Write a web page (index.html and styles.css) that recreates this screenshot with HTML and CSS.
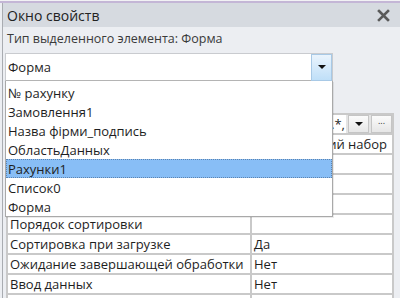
FILE: index.html
```html
<!DOCTYPE html>
<html lang="ru">
<head>
    <meta charset="UTF-8">
    <title>Окно свойств</title>
    <link rel="stylesheet" href="styles.css">
</head>
<body>
    <div class="topline"></div>
    <div class="pane">
        <div class="titlebar">
            <span class="title">Окно свойств</span>
            <svg class="close" width="13" height="13" viewBox="0 0 13 13">
                <path d="M2 2 L11 11 M11 2 L2 11" stroke="#5a5a5a" stroke-width="2.6" stroke-linecap="square"/>
            </svg>
        </div>
        <div class="selinfo">Тип выделенного элемента: Форма</div>

        <div class="combo-wrap">
            <div class="combo">
                <span class="combo-text">Форма</span>
                <span class="combo-btn"><span class="tri"></span></span>
            </div>
            <ul class="droplist">
                <li>№ рахунку</li>
                <li>Замовлення1</li>
                <li>Назва фірми_подпись</li>
                <li>ОбластьДанных</li>
                <li class="selected">Рахунки1</li>
                <li>Список0</li>
                <li>Форма</li>
            </ul>
        </div>

        <div class="sheet">
            <div class="cell"></div>
            <div class="cell value-btns">
                <span class="val-text"><span>и.*,</span></span>
                <span class="mini-btn"><span class="tri"></span></span>
                <span class="mini-btn dots">...</span>
            </div>
            <div class="cell"></div>
            <div class="cell val-right">ий набор</div>
            <div class="cell"></div>
            <div class="cell"></div>
            <div class="cell"></div>
            <div class="cell"></div>
            <div class="cell"></div>
            <div class="cell"></div>
            <div class="cell">Порядок сортировки</div>
            <div class="cell"></div>
            <div class="cell">Сортировка при загрузке</div>
            <div class="cell">Да</div>
            <div class="cell">Ожидание завершающей обработки</div>
            <div class="cell">Нет</div>
            <div class="cell">Ввод данных</div>
            <div class="cell">Нет</div>
            <div class="cell"></div>
            <div class="cell"></div>
        </div>
    </div>
</body>
</html>
```

FILE: styles.css
```css
html {
    height: 298px;
    overflow: hidden;
}
body {
    margin: 0;
    padding: 0;
    height: 298px;
    background-color: #eceef2;
    font-family: "Open Sans", "Noto Sans", sans-serif;
    color: #1e1e1e;
    overflow: hidden;
}
.topline {
    height: 1px;
    background-color: #f2f2f4;
    border-bottom: 2px solid #c4b6d6;
}
.pane {
    margin-left: 2px;
    border-left: 1px solid #a9acb1;
    height: 295px;
    overflow: hidden;
}
.titlebar {
    height: 24px;
    background-color: #d6dae0;
    display: flex;
    align-items: center;
    justify-content: space-between;
    padding: 0 10px 0 4px;
}
.title {
    font-size: 14px;
    color: #222;
}
.selinfo {
    font-size: 12.5px;
    color: #3a3a3a;
    padding: 3px 0 0 4px;
    height: 23px;
}
.combo-wrap {
    position: relative;
    margin-left: 2px;
    width: 328px;
}
.combo {
    height: 26px;
    background-color: white;
    border: 1px solid #c9cbcf;
    border-bottom-color: #b4b4b4;
    display: flex;
    align-items: center;
    justify-content: space-between;
}
.combo-text {
    font-size: 13px;
    padding-left: 2px;
}
.combo-btn {
    width: 19px;
    height: 25px;
    border: 1px solid #a8c9e6;
    background: linear-gradient(#eaf4fd, #bfdff8);
    display: flex;
    align-items: center;
    justify-content: center;
}
.tri {
    width: 0;
    height: 0;
    border-left: 4px solid transparent;
    border-right: 4px solid transparent;
    border-top: 4px solid #111;
}
.droplist {
    position: absolute;
    left: 0;
    top: 28px;
    width: 326px;
    margin: 0;
    padding: 2px 0 0 0;
    list-style: none;
    background-color: white;
    border: 1px solid #a9a9a9;
    border-top: none;
    box-shadow: 1px 1px 0 rgba(0, 0, 0, 0.08);
    z-index: 2;
}
.droplist li {
    height: 19px;
    line-height: 18px;
    font-size: 13px;
    padding-left: 1px;
    border: 1px dotted transparent;
    box-sizing: border-box;
}
.droplist li.selected {
    background-color: #88bef6;
    border-color: #5d84b0;
}
.sheet {
    margin: 32px 0 0 3px;
    width: 384px;
    padding: 2px;
    background-color: #c9c9c9;
    display: grid;
    grid-template-columns: 242px 140px;
    grid-auto-rows: 18px;
    gap: 2px;
}
.cell {
    background-color: white;
    font-size: 13px;
    line-height: 19px;
    padding-left: 2px;
    white-space: nowrap;
    overflow: hidden;
}
.val-right {
    text-align: right;
    padding-right: 5px;
}
.value-btns {
    display: flex;
    align-items: center;
    gap: 2px;
    padding-left: 0;
    background-color: #e4e4e4;
}
.val-text {
    flex: 1;
    display: flex;
    justify-content: flex-end;
    background-color: white;
    height: 18px;
    padding-right: 1px;
}
.mini-btn {
    width: 19px;
    height: 16px;
    border: 1px solid #c5c5c5;
    background: linear-gradient(#fbfbfb, #e6e6e6);
    display: flex;
    align-items: center;
    justify-content: center;
    font-size: 9px;
    line-height: 10px;
    color: #333;
}
.dots {
    align-items: flex-start;
}
```
